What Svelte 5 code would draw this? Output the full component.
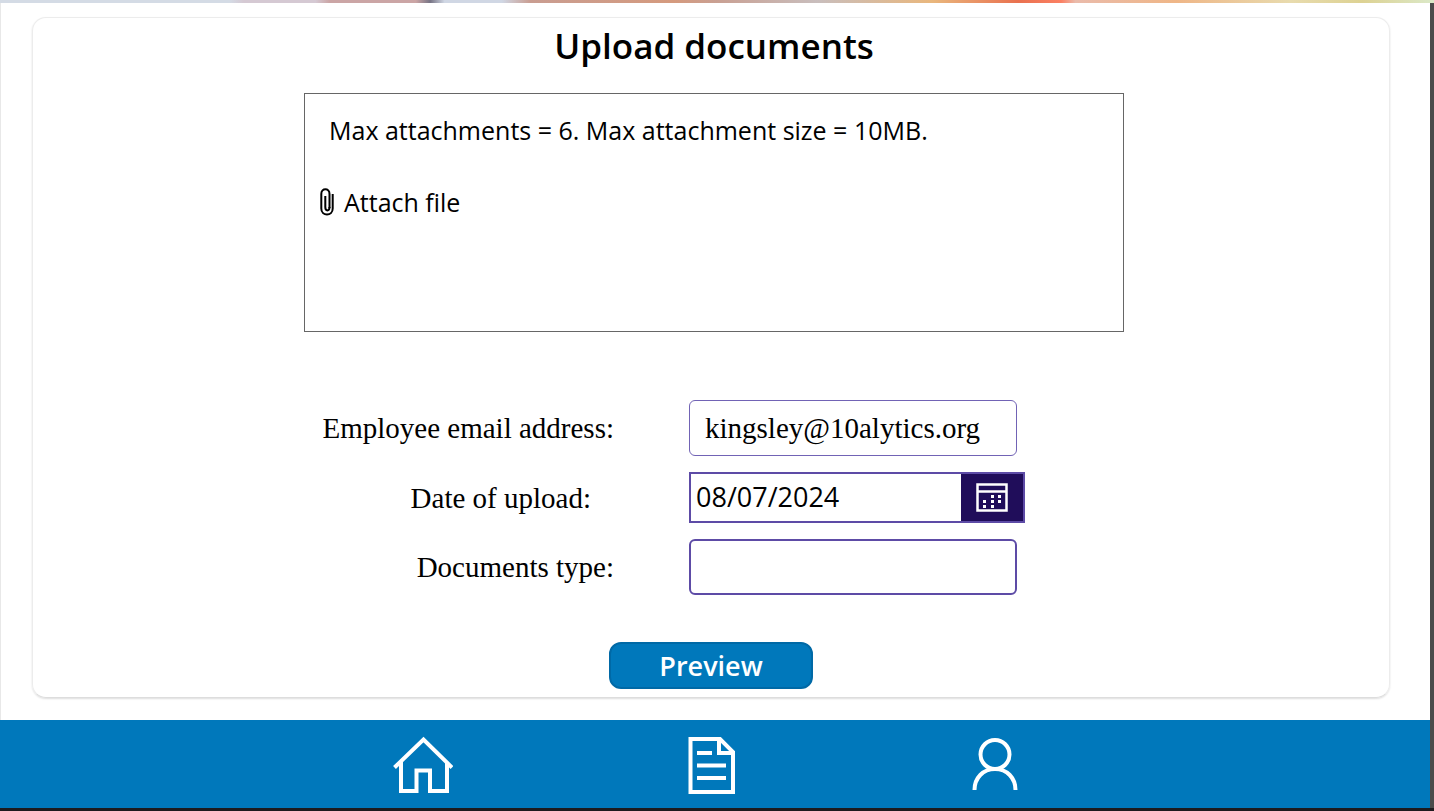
<script>
  let email = $state('kingsley@10alytics.org');
  let uploadDate = $state('08/07/2024');
  let documentType = $state('');
</script>

<div class="page">
  <div class="banner"></div>
  <div class="screen">
    <main>
      <form class="card" onsubmit={(e) => e.preventDefault()}>
        <h1>Upload documents</h1>

        <section class="attachments">
          <p>Max attachments = 6. Max attachment size = 10MB.</p>
          <button type="button" class="attach">
            <svg width="14" height="28" viewBox="0 0 14 28" fill="none" stroke="#000" stroke-width="2" aria-hidden="true">
              <path d="M9.500 20V6C9.500 -.3 1.300 -.3 1.300 6V20.500C1.300 28.500 12.700 28.500 12.700 20.500V6" />
              <path d="M9.500 19C9.500 23.500 5.300 23.500 5.300 19V8" />
            </svg>
            <span>Attach file</span>
          </button>
        </section>

        <div class="fields">
          <label for="email">Employee email address:</label>
          <input id="email" class="field email" type="text" bind:value={email} />

          <label for="date" class="short">Date of upload:</label>
          <div class="date">
            <input id="date" type="text" bind:value={uploadDate} />
            <button type="button" aria-label="Open calendar">
              <svg width="32" height="29" viewBox="0 0 32 29" aria-hidden="true">
                <path d="M1.500 1.500H30.500V27.500H1.500ZM1.500 8.500H30.500" fill="none" stroke="#fff" stroke-width="2.500" />
                <path d="M15 12h3v3h-3zM22 12h3v3h-3zM7 17h3v3h-3zM15 17h3v3h-3zM22 17h3v3h-3zM7 22h3v3h-3zM15 22h3v3h-3z" fill="#fff" />
              </svg>
            </button>
          </div>

          <label for="type">Documents type:</label>
          <select id="type" class="field type" bind:value={documentType}>
            <option value=""></option>
          </select>
        </div>

        <button type="submit" class="preview">Preview</button>
      </form>
    </main>

    <nav>
      <a href="#home" aria-label="Home">
        <svg width="60" height="60" viewBox="0 0 60 60" fill="none" stroke="#fff" stroke-width="4" aria-hidden="true">
          <path d="M1.500 31.500L30.500 3.500L59 31.500M8 26V55H23.500V34.500H37V55H54V26" />
        </svg>
      </a>
      <a href="#documents" aria-label="Documents">
        <svg width="60" height="60" viewBox="0 0 60 60" fill="none" stroke="#fff" stroke-width="4" aria-hidden="true">
          <path d="M11.500 3H41L54 16V56H11.500ZM40 3V17H54M18 17H33M18 29.500H47M18 42H47" />
        </svg>
      </a>
      <a href="#profile" aria-label="Profile">
        <svg width="60" height="60" viewBox="0 0 60 60" fill="none" stroke="#fff" stroke-width="4" aria-hidden="true">
          <circle cx="30" cy="18.500" r="14.500" />
          <path d="M9.500 54C9.500 42 18 33 30 33S50.500 42 50.500 54" />
        </svg>
      </a>
    </nav>
  </div>
  <div class="baseline"></div>
</div>

<style>
  .page {
    min-height: 100vh;
    display: flex;
    flex-direction: column;
    font-family: "Open Sans", sans-serif;
    color: #000;
    background: #fff;
  }
  .page * { box-sizing: border-box; }
  .banner {
    height: 3px;
    background: linear-gradient(90deg, #d4dbe5 0 16%, #d5c9d3 17% 22%, #cba5a5 23% 29%, #777485 30%, #d0d7e4 31% 35%, #c99d91 37%, #d59a7e 47%, #c9a093 50%, #c9bebd 57%, #e9b77d 65%, #e9714f 71%, #fb8063 74%, #eabbab 75%, #efb687 82%, #e8dbae 90%, #ddd293 95%, #dbe9c9);
  }
  .screen {
    flex: 1;
    display: flex;
    flex-direction: column;
    border-right: 4px solid #4b4b4b;
  }
  main {
    flex: 1;
    display: flex;
    padding: 14px 40px 22px 31px;
    border-left: 1px solid #e8e8e8;
  }
  .card {
    flex: 1;
    display: flex;
    flex-direction: column;
    align-items: center;
    padding: 0 0 8px 6px;
    border: 1px solid #ececec;
    border-bottom-color: #ddd;
    border-radius: 14px;
    box-shadow: 0 1px 2px #0002;
  }
  h1 {
    margin: 0;
    padding-top: 4px;
    font-size: 35px;
    line-height: 48px;
    font-weight: 600;
  }
  .attachments {
    width: 100%;
    max-width: 820px;
    height: 239px;
    margin-top: 23px;
    padding: 18px 15px;
    border: 1px solid #666;
    font-size: 25px;
    line-height: 36px;
  }
  p { margin: 0 0 36px; padding-left: 9px; }
  button { font: inherit; color: inherit; border: 0; background: none; padding: 0; cursor: pointer; }
  .attach { display: flex; align-items: center; gap: 10px; }
  svg { display: block; }
  .fields {
    width: 100%;
    max-width: 820px;
    display: grid;
    grid-template-columns: 310px 336px;
    column-gap: 75px;
    row-gap: 16px;
    align-items: center;
    margin-top: 68px;
    font-family: "Liberation Serif", serif;
    font-size: 29px;
    line-height: 36px;
  }
  label { text-align: right; }
  .short { padding-right: 23px; }
  input, select { font: inherit; color: inherit; border: 0; outline: 0; background: #fff; min-width: 0; }
  .field { width: 328px; height: 56px; padding: 0 15px; border-radius: 6px; }
  .email { border: 1px solid #7163b5; }
  .type { border: 2px solid #5d4ba6; appearance: none; }
  .date {
    display: flex;
    height: 51px;
    border: 2px solid #5d4ba6;
    font-family: "Open Sans", sans-serif;
    font-size: 27px;
  }
  .date input { flex: 1; padding: 0 5px 2px; }
  .date button {
    width: 62px;
    display: grid;
    place-items: center;
    background: #200d5a;
  }
  .preview {
    width: 204px;
    height: 47px;
    margin: auto 6px 0 0;
    border: 2px solid #0069a6;
    border-radius: 12px;
    background: #0078bb;
    color: #fff;
    font-size: 27px;
    line-height: 36px;
    font-weight: 600;
  }
  nav {
    height: 88px;
    display: flex;
    justify-content: center;
    align-items: center;
    gap: 226px;
    padding: 4px 12px 0 0;
    background: #0078bb;
  }
  .baseline { height: 3px; background: #1d1b1e; }
</style>
